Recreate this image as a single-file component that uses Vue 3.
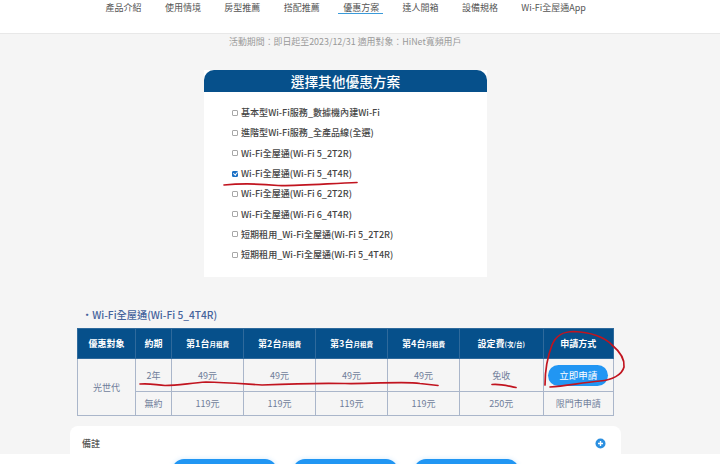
<script setup>
const navItems = ['產品介紹', '使用情境', '房型推薦', '搭配推薦', '優惠方案', '達人開箱', '設備規格', 'Wi-Fi全屋通App']
const plans = [
  '基本型Wi-Fi服務_數據機內建Wi-Fi',
  '進階型Wi-Fi服務_全產品線(全選)',
  'Wi-Fi全屋通(Wi-Fi 5_2T2R)',
  'Wi-Fi全屋通(Wi-Fi 5_4T4R)',
  'Wi-Fi全屋通(Wi-Fi 6_2T2R)',
  'Wi-Fi全屋通(Wi-Fi 6_4T4R)',
  '短期租用_Wi-Fi全屋通(Wi-Fi 5_2T2R)',
  '短期租用_Wi-Fi全屋通(Wi-Fi 5_4T4R)'
]
const selected = 3
</script>

<template>
  <div class="page">
    <nav class="nav">
      <a v-for="(item, i) in navItems" :key="item" class="nav-item" :class="{ active: i === 4 }">{{ item }}</a>
    </nav>
    <main class="main">
      <p class="period">活動期間：即日起至2023/12/31 適用對象：HiNet寬頻用戶</p>
      <section class="chooser">
        <h2 class="chooser-title">選擇其他優惠方案</h2>
        <ul class="plans">
          <li v-for="(plan, i) in plans" :key="plan" class="plan">
            <input type="checkbox" class="check" :checked="i === selected" />
            <span>{{ plan }}</span>
          </li>
        </ul>
      </section>
      <h3 class="plan-title">・Wi-Fi全屋通(Wi-Fi 5_4T4R)</h3>
      <table class="fees">
        <colgroup>
          <col class="c-target" /><col class="c-term" /><col class="c-fee" /><col class="c-fee" />
          <col class="c-fee" /><col class="c-fee" /><col class="c-setup" /><col class="c-apply" />
        </colgroup>
        <thead>
          <tr>
            <th>優惠對象</th>
            <th>約期</th>
            <th>第1台<small>月租費</small></th>
            <th>第2台<small>月租費</small></th>
            <th>第3台<small>月租費</small></th>
            <th>第4台<small>月租費</small></th>
            <th>設定費<small>(次/台)</small></th>
            <th>申請方式</th>
          </tr>
        </thead>
        <tbody>
          <tr class="row-a">
            <td rowspan="2">光世代</td>
            <td>2年</td><td>49元</td><td>49元</td><td>49元</td><td>49元</td><td>免收</td>
            <td><button class="apply">立即申請</button></td>
          </tr>
          <tr class="row-b">
            <td>無約</td><td>119元</td><td>119元</td><td>119元</td><td>119元</td><td>250元</td><td>限門市申請</td>
          </tr>
        </tbody>
      </table>
      <section class="notes">
        <span class="notes-title">備註</span>
        <svg class="plus" width="11" height="11" viewBox="0 0 11 11">
          <circle cx="5.500" cy="5.500" r="5" fill="#2b8fe0" />
          <path d="M5.500 3v5M3 5.500h5" stroke="#fff" stroke-width="1.400" />
        </svg>
      </section>
    </main>
    <footer class="footer">
      <button class="cta"></button>
      <button class="cta"></button>
      <button class="cta"></button>
    </footer>
    <svg class="ink" width="720" height="464" viewBox="0 0 720 464" fill="none">
      <g stroke="#c1141f" stroke-width="1.700" stroke-linecap="round" stroke-linejoin="round">
        <path d="M224 185C240 183.500 262 184 278 185.500C295 186 330 183.500 357 182.500" />
        <path d="M140 384C150 383 156 385 165 385.500C178 385.500 190 383 206 382C225 382.500 245 384 262 385C285 384 320 383 345 383.500C375 384 405 381 420 383.500L438 385.500" />
        <path d="M492 384.500C500 383.500 508 386 516 387.500" />
        <path d="M550 387C565 386 580 383 600 381C612 380 622 375 624 367C625 358 618 350 612 345C605 337 590 332 574 331.500C563 331.500 556 335 552 345C547 358 545 372 545 385" />
      </g>
    </svg>
  </div>
</template>

<style>
html, body { margin: 0; padding: 0; background: #fff; }
</style>

<style scoped>
.page {
  position: relative;
  width: 720px;
  height: 464px;
  overflow: hidden;
  display: flex;
  flex-direction: column;
  font-family: "Noto Sans CJK TC", "Noto Sans", sans-serif;
  background: #fff;
}
.nav {
  height: 34px;
  flex: none;
  box-sizing: border-box;
  display: flex;
  gap: 23.400px;
  padding: 1px 0 0 105.500px;
  background: #fff;
  border-bottom: 1px solid #e8e8e8;
}
.nav-item {
  position: relative;
  font-size: 9px;
  line-height: 13px;
  color: #555;
}
.nav-item.active::after {
  content: "";
  position: absolute;
  left: -5px;
  right: -4px;
  top: 12px;
  height: 1px;
  background: #3a9ad9;
}
.main {
  flex: none;
  height: 420px;
  overflow: hidden;
  background: #f5f5f5;
}
.period {
  margin: 0 0 0 229px;
  padding-top: 1px;
  font-size: 8.920px;
  line-height: 14px;
  color: #999;
  white-space: nowrap;
}
.chooser {
  margin: 21px 0 0 204px;
  width: 283px;
  height: 207px;
  background: #fff;
}
.chooser-title {
  margin: 0;
  height: 22px;
  border-radius: 10px 10px 0 0;
  background: #06508b;
  color: #fff;
  font-size: 13.700px;
  font-weight: 500;
  line-height: 23px;
  text-align: center;
}
.plans {
  list-style: none;
  margin: 0;
  padding: 10.500px 0 0 28px;
}
.plan {
  display: flex;
  align-items: center;
  gap: 3px;
  height: 20.300px;
  font-size: 9.050px;
  font-weight: 500;
  color: #444;
  white-space: nowrap;
}
.check {
  appearance: none;
  position: relative;
  box-sizing: border-box;
  width: 6px;
  height: 6px;
  margin: 0;
  flex: none;
  border: 1px solid #a8a8a8;
  border-radius: 1px;
  background: #fff;
}
.check:checked {
  border-color: #1a6fc4;
  background: #1a6fc4;
}
.check:checked::after {
  content: "";
  position: absolute;
  left: 0.800px;
  top: -0.500px;
  width: 1.500px;
  height: 3px;
  border: solid #fff;
  border-width: 0 1px 1px 0;
  transform: rotate(40deg);
}
.plan-title {
  margin: 31px 0 0 82px;
  font-size: 10.200px;
  line-height: 14px;
  font-weight: 500;
  color: #45639c;
}
.fees {
  margin: 6px 0 0 77px;
  width: 536px;
  table-layout: fixed;
  border-collapse: collapse;
  font-size: 9px;
  color: #6f7d9a;
  text-align: center;
}
.c-target { width: 58px; }
.c-term { width: 36px; }
.c-fee { width: 72px; }
.c-setup { width: 83.500px; }
.c-apply { width: 70.500px; }
.fees th, .fees td {
  border: 1px solid #aab6ca;
  padding: 0;
}
.fees th {
  height: 29px;
  background: #06508b;
  border-color: #2f6a9c;
  color: #fff;
  font-weight: 700;
}
.fees small {
  font-size: 6.500px;
  font-weight: 700;
}
.row-a td { height: 32px; }
.row-b td { height: 23px; }
.apply {
  display: block;
  margin: 0 auto;
  width: 60px;
  height: 21px;
  padding: 0;
  border: 0;
  border-radius: 11px;
  background: #2196f3;
  color: #fff;
  font: inherit;
  font-size: 9.500px;
}
.notes {
  margin: 10px 0 0 70px;
  width: 551px;
  height: 60px;
  box-sizing: border-box;
  padding: 10px 15px 0 12px;
  display: flex;
  justify-content: space-between;
  align-items: flex-start;
  background: #fff;
  border-radius: 8px;
}
.notes-title {
  font-size: 9px;
  line-height: 15px;
  font-weight: 500;
  color: #555;
}
.plus { margin-top: 2px; }
.footer {
  flex: 1;
  display: flex;
  gap: 16.500px;
  padding: 5px 0 0 172px;
  background: #fff;
}
.cta {
  width: 104.500px;
  height: 32px;
  flex: none;
  padding: 0;
  border: 0;
  border-radius: 12px;
  background: #2196f3;
  box-shadow: 0 0 5px rgba(33, 150, 243, 0.2);
}
.ink {
  position: absolute;
  left: 0;
  top: 0;
  pointer-events: none;
}
</style>
